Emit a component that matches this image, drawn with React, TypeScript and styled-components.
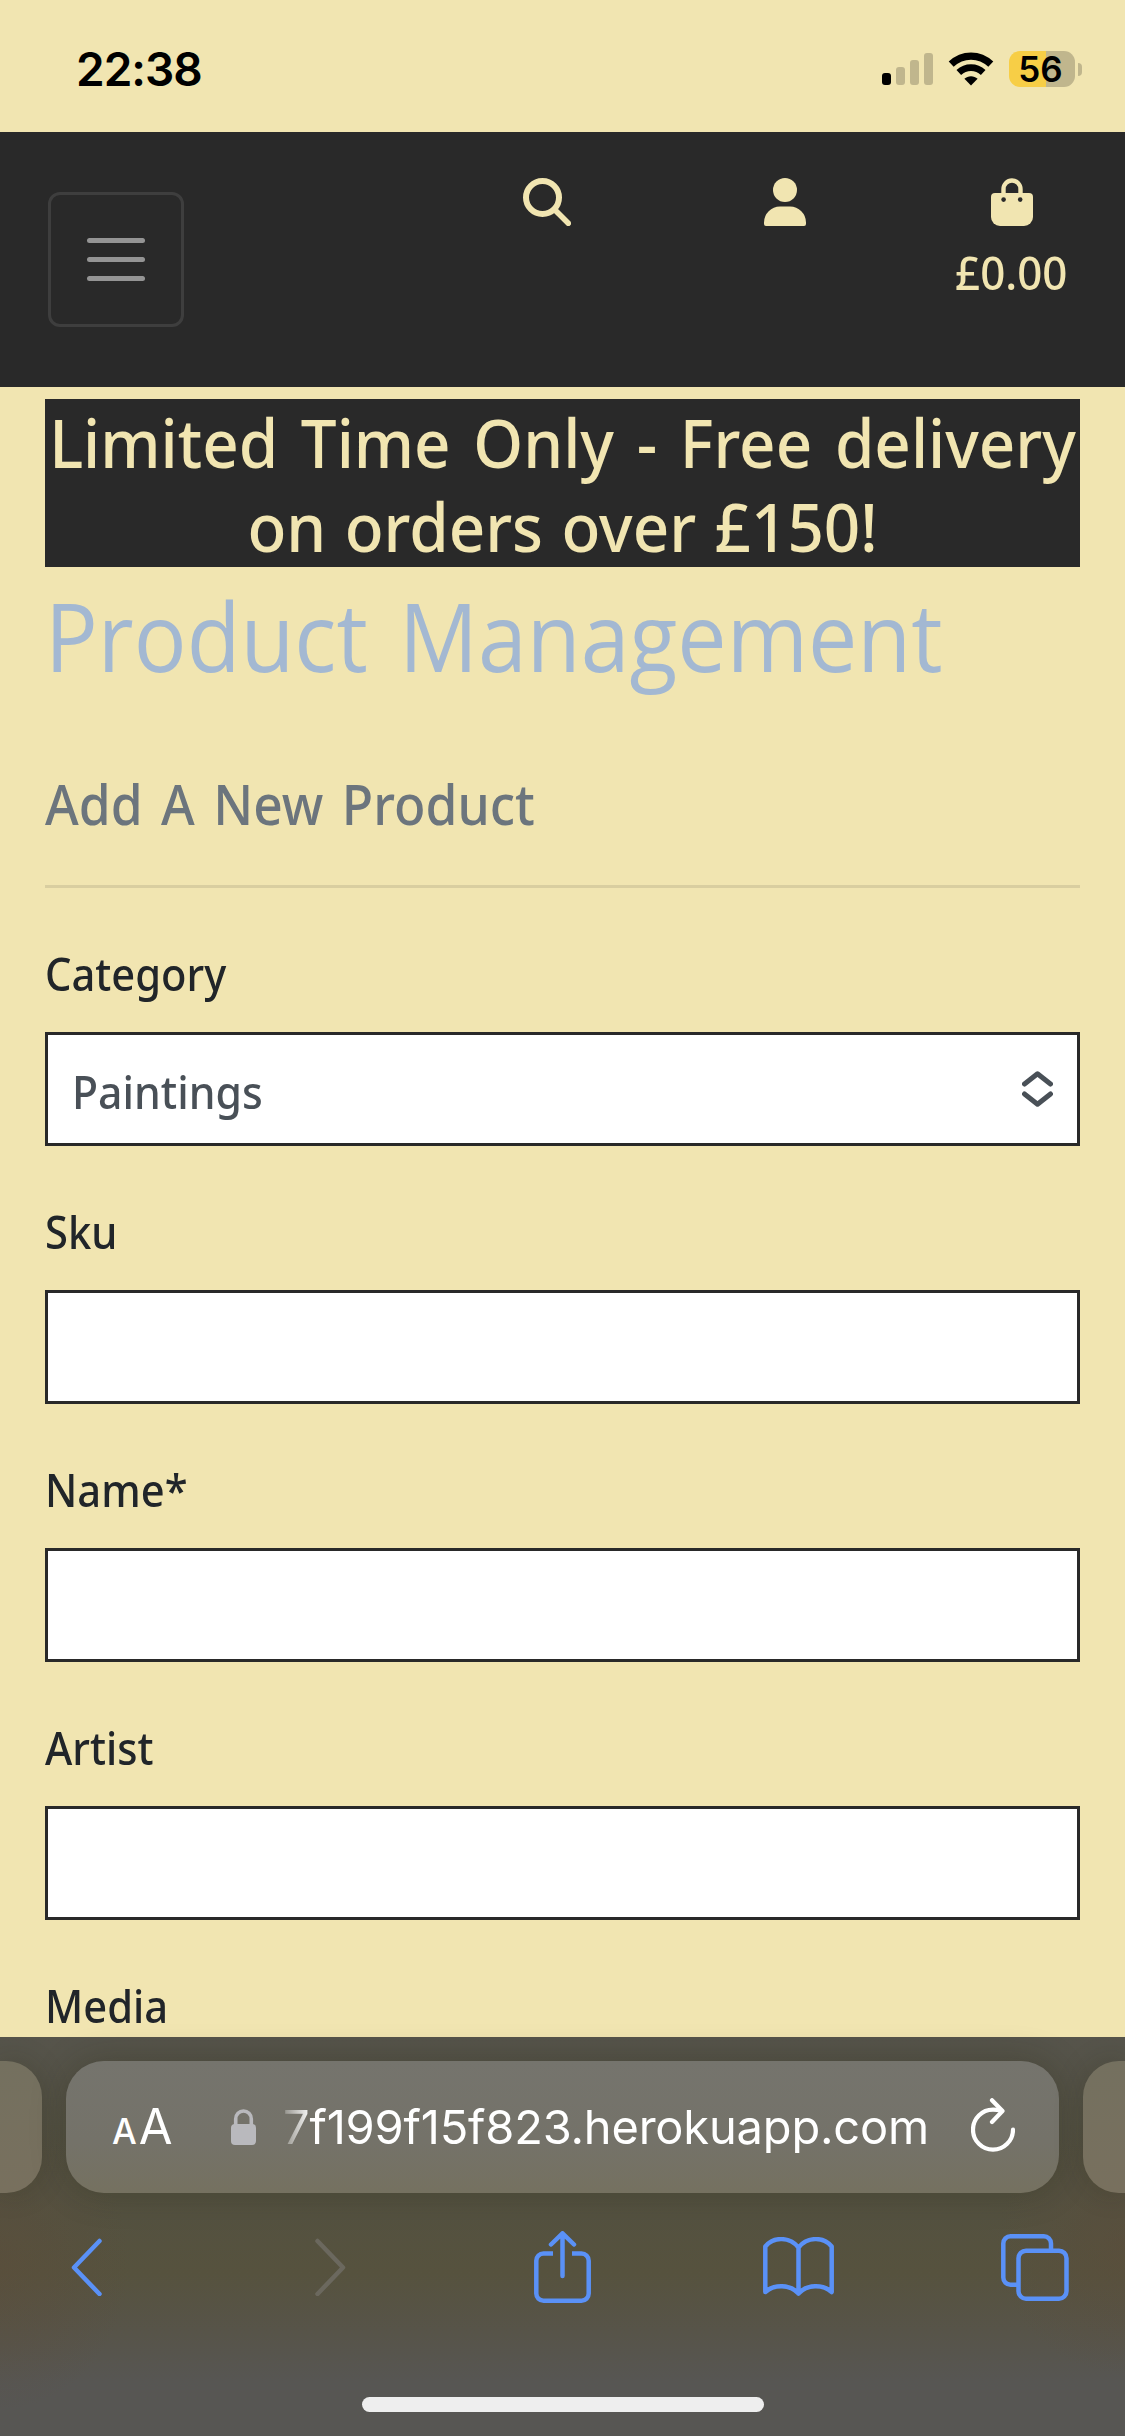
import React from "react";
import styled, { createGlobalStyle } from "styled-components";

const cream = "#f1e5b1";
const charcoal = "#292929";
const blue = "#5a91f7";

const GlobalStyle = createGlobalStyle`
  *, *::before, *::after { box-sizing: border-box; }
  body { margin: 0; background: ${cream}; }
  h1, h2, p { margin: 0; }
`;

const Screen = styled.div`
  width: 1125px;
  height: 2436px;
  display: flex;
  flex-direction: column;
  overflow: hidden;
  background: ${cream};
  font-family: "Noto Sans", "Open Sans", sans-serif;
  font-weight: 500;
  color: #212529;
`;

/* Status bar */

const StatusBar = styled.div`
  flex: none;
  height: 132px;
  padding: 33px 43px 27px 76px;
  display: flex;
  align-items: center;
  justify-content: space-between;
  font-family: Inter, sans-serif;
  color: #000;
`;

const Clock = styled.span`
  font-size: 46px;
  font-weight: 600;
  line-height: 72px;
  letter-spacing: -1px;
`;

const Indicators = styled.div`
  display: flex;
  align-items: center;
`;

const Signal = styled.div`
  display: flex;
  align-items: flex-end;
  gap: 5px;
  height: 32px;
  margin-right: 15px;
`;

const SignalBar = styled.span<{ $height: number; $on?: boolean }>`
  width: 9px;
  height: ${(p) => p.$height}px;
  border-radius: 3px;
  background: ${(p) => (p.$on ? "#000" : "#c0b68d")};
`;

const WifiIcon = styled.svg`
  display: block;
  width: 46px;
  height: 34px;
  margin-right: 15px;
`;

const Battery = styled.div`
  width: 66px;
  height: 36px;
  border-radius: 11px;
  background: linear-gradient(to right, #f7ce46 37px, #c0b68d 37px);
  display: flex;
  align-items: center;
  justify-content: center;
  font-size: 35px;
  font-weight: 600;
  line-height: 36px;
  padding-right: 3px;
`;

const BatteryTip = styled.span`
  width: 4px;
  height: 13px;
  margin-left: 3px;
  border-radius: 0 5px 5px 0;
  background: #c0b68d;
`;

/* Site header */

const Header = styled.header`
  flex: none;
  height: 255px;
  padding: 0 58px 0 48px;
  display: flex;
  justify-content: space-between;
  background: ${charcoal};
  color: ${cream};
`;

const Toggler = styled.button`
  width: 136px;
  height: 135px;
  margin-top: 60px;
  padding: 0;
  border: 3px solid #3e3e3e;
  border-radius: 12px;
  background: transparent;
  display: flex;
  flex-direction: column;
  align-items: center;
  justify-content: center;
  gap: 14px;
`;

const TogglerLine = styled.span`
  width: 58px;
  height: 5px;
  border-radius: 3px;
  background: #949494;
`;

const HeaderNav = styled.nav`
  display: grid;
  grid-template-columns: 241px 192px 111px;
  align-items: start;
  padding-top: 46px;
`;

const NavItem = styled.div<{ $centered?: boolean }>`
  display: flex;
  flex-direction: column;
  align-items: ${(p) => (p.$centered ? "center" : "flex-start")};
`;

const NavIcon = styled.svg`
  display: block;
  height: 48px;
`;

const Price = styled.p`
  font-size: 45.5px;
  line-height: 60px;
  margin-top: 16px;
  white-space: nowrap;
  transform: scaleX(0.965);
`;

/* Page content */

const Main = styled.main`
  flex: 1;
  min-height: 0;
  overflow: hidden;
  padding: 12px 45px 0;
`;

const Banner = styled.p`
  height: 168px;
  padding-top: 1px;
  background: ${charcoal};
  color: ${cream};
  font-size: 67px;
  line-height: 84px;
  text-align: center;
`;

const BannerLine = styled.span<{ $wordGap: number }>`
  display: block;
  white-space: nowrap;
  margin: 0 -40px;
  word-spacing: ${(p) => p.$wordGap}px;
  transform: scaleX(0.95);
`;

const Title = styled.h1`
  margin-top: 19px;
  font-family: "Open Sans", "Noto Sans", sans-serif;
  font-size: 94.5px;
  font-weight: 400;
  line-height: 100px;
  word-spacing: 9px;
  color: #a3b8d2;
  white-space: nowrap;
  transform: scaleX(0.93);
  transform-origin: left;
`;

const Subtitle = styled.h2`
  margin-top: 87px;
  font-size: 56px;
  font-weight: 500;
  line-height: 60px;
  word-spacing: 5.5px;
  color: #6c757d;
  transform: scaleX(0.92);
  transform-origin: left;
`;

const Divider = styled.hr`
  height: 3px;
  margin: 52px 0 48px;
  border: 0;
  background: #d9cea0;
`;

const Form = styled.form`
  display: flex;
  flex-direction: column;
  gap: 48px;
`;

const Field = styled.div`
  display: flex;
  flex-direction: column;
  gap: 21px;
`;

const Label = styled.label`
  font-size: 44.5px;
  line-height: 75px;
  transform: scaleX(0.937);
  transform-origin: left;
`;

const Input = styled.input`
  width: 100%;
  height: 114px;
  border: 3px solid ${charcoal};
  border-radius: 0;
  background: #fff;
  outline: none;
`;

const Select = styled.div`
  height: 114px;
  padding: 0 24px 0 24px;
  border: 3px solid ${charcoal};
  background: #fff;
  display: flex;
  align-items: center;
  justify-content: space-between;
  color: #495057;
`;

const SelectValue = styled.span`
  font-size: 44.5px;
  line-height: 60px;
  padding-top: 5px;
  transform: scaleX(0.96);
  transform-origin: left;
`;

const SelectArrows = styled.svg`
  display: block;
  width: 31px;
  height: 36px;
`;

/* Browser chrome */

const BrowserBar = styled.footer`
  flex: none;
  height: 399px;
  padding-top: 24px;
  display: flex;
  flex-direction: column;
  background:
    radial-gradient(ellipse 130px 150px at 0 56%, rgba(92, 76, 58, 0.5), transparent),
    radial-gradient(ellipse 130px 130px at 100% 52%, rgba(92, 76, 58, 0.5), transparent),
    linear-gradient(to bottom, #56544b 0, #535141 150px, #56523e 235px, #575449 295px, #575653 345px, #575653 100%);
`;

const AddressRow = styled.div`
  display: flex;
  justify-content: space-between;
  height: 132px;
`;

const NeighbourTab = styled.div<{ $side: "left" | "right" }>`
  width: 42px;
  background: linear-gradient(to bottom, #74705f, #78705e);
  border-radius: ${(p) => (p.$side === "left" ? "0 36px 36px 0" : "36px 0 0 36px")};
  box-shadow: 0 0 30px rgba(30, 28, 10, 0.2);
`;

const AddressBar = styled.div`
  width: 993px;
  padding: 0 44px 0 46px;
  border-radius: 38px;
  background: linear-gradient(to bottom, #75746d, #747269 60%, #757160);
  box-shadow: 0 0 36px rgba(30, 28, 10, 0.24);
  display: flex;
  align-items: center;
  font-family: Inter, sans-serif;
  font-weight: 400;
  color: #fff;
`;

const TextSize = styled.div`
  display: flex;
  align-items: baseline;
  gap: 2px;
  width: 119px;
  padding-top: 3px;
  line-height: 60px;
`;

const LetterA = styled.span<{ $size: number; $weight: number }>`
  font-size: ${(p) => p.$size}px;
  font-weight: ${(p) => p.$weight};
`;

const LockIcon = styled.svg`
  display: block;
  width: 25px;
  height: 36px;
`;

const Url = styled.span`
  flex: 1;
  margin-left: 27px;
  font-size: 47px;
  line-height: 60px;
  letter-spacing: -0.18px;
  white-space: nowrap;
  mask-image: linear-gradient(to right, rgba(0, 0, 0, 0.2) 0, #000 28px);
`;

const ReloadIcon = styled.svg`
  display: block;
  width: 44px;
  height: 54px;
  margin-bottom: 4px;
`;

const Toolbar = styled.nav`
  display: grid;
  grid-template-columns: 244px 219px 229px 238px 68px;
  align-items: center;
  height: 72px;
  margin-top: 38px;
  padding-left: 71px;
`;

const ToolIcon = styled.svg<{ $dim?: boolean }>`
  display: block;
  fill: none;
  stroke: ${(p) => (p.$dim ? "#6b685e" : blue)};
  stroke-width: 4.5;
  stroke-linecap: round;
  stroke-linejoin: round;
`;

const HomeIndicator = styled.div`
  width: 402px;
  height: 15px;
  margin: 94px auto 0;
  border-radius: 8px;
  background: #eee;
`;

const textFields = ["Sku", "Name*", "Artist"];

export default function App() {
  return (
    <>
      <GlobalStyle />
      <Screen>
        <StatusBar>
          <Clock>22:38</Clock>
          <Indicators>
            <Signal>
              <SignalBar $height={12} $on />
              <SignalBar $height={18} />
              <SignalBar $height={25} />
              <SignalBar $height={32} />
            </Signal>
            <WifiIcon viewBox="0 0 46 34">
              <path d="M3.2 12.2C14.5 1.4 31.5 1.4 42.8 12.2" fill="none" stroke="#000" strokeWidth="7.2" />
              <path d="M10.8 20.5C17.8 14 28.2 14 35.2 20.5" fill="none" stroke="#000" strokeWidth="6.8" />
              <path d="M23 33.5 16.4 26.8C20 23.4 26 23.4 29.6 26.8Z" fill="#000" />
            </WifiIcon>
            <Battery>56</Battery>
            <BatteryTip />
          </Indicators>
        </StatusBar>

        <Header>
          <Toggler aria-label="Menu">
            <TogglerLine />
            <TogglerLine />
            <TogglerLine />
          </Toggler>
          <HeaderNav>
            <NavItem>
              <NavIcon width="48" viewBox="0 0 48 48" fill="none" stroke={cream}>
                <circle cx="19.5" cy="19.5" r="16.5" strokeWidth="6" />
                <path d="M31.5 31.5 45.3 45.3" strokeWidth="5.6" strokeLinecap="round" />
              </NavIcon>
            </NavItem>
            <NavItem>
              <NavIcon width="42" viewBox="0 0 42 48" fill={cream}>
                <circle cx="21" cy="12" r="12" />
                <path d="M16 28.5h10A16 16 0 0 1 42 44.5V46a2 2 0 0 1-2 2H2a2 2 0 0 1-2-2v-1.5A16 16 0 0 1 16 28.5Z" />
              </NavIcon>
            </NavItem>
            <NavItem $centered>
              <NavIcon width="42" viewBox="0 0 42 48">
                <path d="M12.5 20V11a8.500 8.500 0 0 1 17 0v9" fill="none" stroke={cream} strokeWidth="4.4" />
                <path d="M4 15h34a4 4 0 0 1 4 4v20a9 9 0 0 1-9 9H9a9 9 0 0 1-9-9V19a4 4 0 0 1 4-4Z" fill={cream} />
                <circle cx="12.6" cy="21.6" r="2.3" fill={charcoal} />
                <circle cx="29.2" cy="21.6" r="2.3" fill={charcoal} />
              </NavIcon>
              <Price>£0.00</Price>
            </NavItem>
          </HeaderNav>
        </Header>

        <Main>
          <Banner>
            <BannerLine $wordGap={6.5}>Limited Time Only - Free delivery</BannerLine>
            <BannerLine $wordGap={2}>on orders over £150!</BannerLine>
          </Banner>
          <Title>Product Management</Title>
          <Subtitle>Add A New Product</Subtitle>
          <Divider />
          <Form>
            <Field>
              <Label>Category</Label>
              <Select>
                <SelectValue>Paintings</SelectValue>
                <SelectArrows viewBox="0 0 31 36" fill="none" stroke="#495057" strokeWidth="5" strokeLinecap="round" strokeLinejoin="round">
                  <path d="M2.5 13 15.5 2.8 28.5 13" />
                  <path d="M2.5 23 15.5 33.2 28.5 23" />
                </SelectArrows>
              </Select>
            </Field>
            {textFields.map((name) => (
              <Field key={name}>
                <Label>{name}</Label>
                <Input aria-label={name} />
              </Field>
            ))}
            <Field>
              <Label>Media</Label>
            </Field>
          </Form>
        </Main>

        <BrowserBar>
          <AddressRow>
            <NeighbourTab $side="left" />
            <AddressBar>
              <TextSize>
                <LetterA $size={35} $weight={500}>A</LetterA>
                <LetterA $size={49} $weight={400}>A</LetterA>
              </TextSize>
              <LockIcon viewBox="0 0 25 36">
                <path d="M4.7 17V10a7.8 8 0 0 1 15.6 0v7" fill="none" stroke="#b9b9bd" strokeWidth="3.6" />
                <rect y="15" width="25" height="21" rx="4" fill="#b9b9bd" />
              </LockIcon>
              <Url>7f199f15f823.herokuapp.com</Url>
              <ReloadIcon viewBox="0 0 44 54" fill="none" stroke="#fff" strokeWidth="4.2" strokeLinecap="round" strokeLinejoin="round">
                <path d="M30 12.8C27.5 12 24.8 11.7 22 11.7A20 20 0 1 0 42 31.7" />
                <path d="M21 2.2 31.5 13 21 24" />
              </ReloadIcon>
            </AddressBar>
            <NeighbourTab $side="right" />
          </AddressRow>

          <Toolbar>
            <ToolIcon width="31" height="58" viewBox="0 0 31 58">
              <path d="M28.5 3 3 29.5 28.5 56" />
            </ToolIcon>
            <ToolIcon $dim width="31" height="58" viewBox="0 0 31 58">
              <path d="M2.5 3 28 29.5 2.5 56" />
            </ToolIcon>
            <ToolIcon width="57" height="72" viewBox="0 0 57 72">
              <path d="M19 22.5H9.5a7.2 7.2 0 0 0-7.2 7.2V62.5a7.2 7.2 0 0 0 7.2 7.2h38a7.2 7.2 0 0 0 7.2-7.2V29.7a7.2 7.2 0 0 0-7.2-7.2H38" strokeLinecap="butt" />
              <path d="M28.5 45V2.5M17 13.5l11.5-11.2L40 13.500" />
            </ToolIcon>
            <ToolIcon width="71" height="60" viewBox="0 0 71 60">
              <path d="M35.5 10.5C27 0 11-1 2.3 9.5V55C11 47 27 47 35.5 56.500C44 47 60 47 68.7 55V9.5C60-1 44 0 35.5 10.5V56.5" />
            </ToolIcon>
            <ToolIcon width="68" height="67" viewBox="0 0 68 67">
              <rect x="17.5" y="16.7" width="48" height="48" rx="7.5" />
              <path d="M50 16V9.5A7.2 7.2 0 0 0 42.8 2.3H9.5A7.2 7.2 0 0 0 2.3 9.5V43.5A7.2 7.2 0 0 0 9.5 50.7H17" strokeLinecap="butt" />
            </ToolIcon>
          </Toolbar>
          <HomeIndicator />
        </BrowserBar>
      </Screen>
    </>
  );
}
